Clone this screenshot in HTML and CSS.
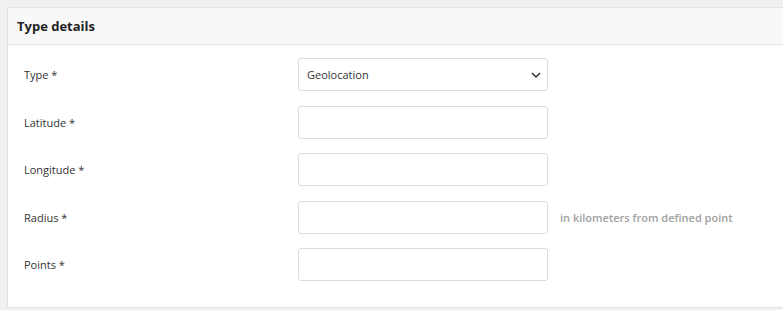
FILE: index.html
```html
<!DOCTYPE html>
<html lang="en">

<head>
    <meta charset="UTF-8">
    <meta name="viewport" content="width=device-width, initial-scale=1.0">
    <title>Type details</title>
    <link rel="stylesheet" href="styles.css">
</head>

<body>
    <!-- Type details panel -->
    <div class="panel">
        <div class="panel-heading">Type details</div>
        <div class="panel-body">
            <div class="form-row">
                <label class="form-label" for="type">Type *</label>
                <div class="select-wrap">
                    <select id="type" class="form-control">
                        <option>Geolocation</option>
                    </select>
                    <svg class="chevron" width="10" height="6" viewBox="0 0 10 6">
                        <path d="M1 1l4 4 4-4" fill="none" stroke="#333" stroke-width="1.5"/>
                    </svg>
                </div>
            </div>
            <div class="form-row">
                <label class="form-label" for="latitude">Latitude *</label>
                <input type="text" id="latitude" class="form-control">
            </div>
            <div class="form-row">
                <label class="form-label" for="longitude">Longitude *</label>
                <input type="text" id="longitude" class="form-control">
            </div>
            <div class="form-row">
                <label class="form-label" for="radius">Radius *</label>
                <input type="text" id="radius" class="form-control">
                <span class="help-text">in kilometers from defined point</span>
            </div>
            <div class="form-row">
                <label class="form-label" for="points">Points *</label>
                <input type="text" id="points" class="form-control">
            </div>
        </div>
    </div>
</body>

</html>
```

FILE: styles.css
```css
/* Body styling */
body {
    font-family: "Open Sans", sans-serif;
    margin: 0;
    padding: 7px 0 0 7px;
    background-color: #f1f1f1;
    color: #333;
    overflow: hidden;
}

/* Panel container */
.panel {
    background-color: #fff;
    border: 1px solid #e3e3e3;
    border-right: none;
    margin-right: -10px;
}

/* Panel heading */
.panel-heading {
    background-color: #f8f8f8;
    border-bottom: 1px solid #e3e3e3;
    height: 36px;
    line-height: 36px;
    padding-left: 9px;
    font-size: 13px;
    font-weight: 700;
    color: #222;
}

/* Panel body */
.panel-body {
    padding: 13px 16px 11px;
}

/* Form row */
.form-row {
    display: flex;
    align-items: center;
    height: 33px;
    margin-bottom: 14.5px;
}

/* Label styling */
.form-label {
    width: 274px;
    font-size: 11px;
    color: #333;
}

/* Input and select styling */
.form-control {
    box-sizing: border-box;
    width: 250px;
    height: 33px;
    padding: 0 8px;
    border: 1px solid #ddd;
    border-radius: 3px;
    background-color: #fff;
    font-family: "Open Sans", sans-serif;
    font-size: 11px;
    color: #333;
    outline: none;
}

select.form-control {
    appearance: none;
    -webkit-appearance: none;
}

/* Select wrapper with chevron */
.select-wrap {
    position: relative;
}

.chevron {
    position: absolute;
    right: 7px;
    top: 14px;
}

/* Help text next to input */
.help-text {
    margin-left: 12px;
    font-size: 11px;
    font-weight: 600;
    color: #a0a0a0;
}
```
